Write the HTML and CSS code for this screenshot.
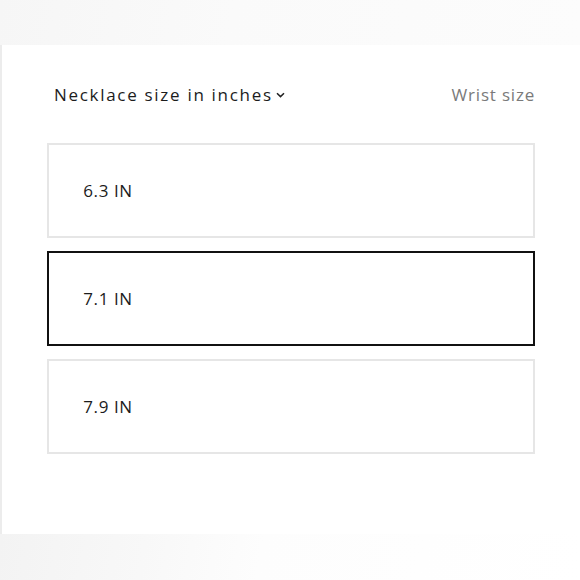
FILE: index.html
```
<!DOCTYPE html>
<html>
<head>
<meta charset="utf-8">
<link rel="stylesheet" href="styles.css">
</head>
<body>
<div class="top-band"></div>
<main class="panel">
  <div class="header">
    <div class="title">Necklace size in inches<svg class="chev" width="9" height="6" viewBox="0 0 9 6"><path d="M1 1.2 L4.5 4.6 L8 1.2" fill="none" stroke="#222" stroke-width="1.5"/></svg></div>
    <div class="alt">Wrist size</div>
  </div>
  <div class="options">
    <div class="option"><span class="label">6.3 IN</span></div>
    <div class="option selected"><span class="label">7.1 IN</span></div>
    <div class="option"><span class="label">7.9 IN</span></div>
  </div>
</main>
<div class="bottom-band"></div>
</body>
</html>
```
FILE: styles.css
```
html, body {
  margin: 0;
  padding: 0;
  background: #fff;
}
body {
  width: 580px;
  height: 580px;
  overflow: hidden;
  font-family: "Open Sans", "Liberation Sans", sans-serif;
  color: #1a1a1a;
}
.top-band {
  height: 45px;
  background: linear-gradient(100deg, #f6f6f6 0%, #fafafa 40%, #fcfcfc 100%);
}
.panel {
  height: 489px;
  box-sizing: border-box;
  border-left: 2px solid #ececec;
  background: #fff;
  padding-top: 37px;
}
.header {
  display: flex;
  justify-content: space-between;
  align-items: center;
  padding: 0 45px 0 52px;
  height: 24px;
}
.title {
  font-size: 17px;
  letter-spacing: 1.7px;
  color: #1c1c1c;
  display: flex;
  align-items: center;
}
.chev {
  margin-left: 3px;
  margin-top: 1px;
}
.alt {
  font-size: 17px;
  letter-spacing: 0.8px;
  color: #7a7a7a;
}
.options {
  display: flex;
  flex-direction: column;
  gap: 13px;
  margin: 37px 45px 0 45px;
}
.option {
  height: 95px;
  box-sizing: border-box;
  border: 2px solid #e6e6e6;
  display: flex;
  align-items: center;
}
.option.selected {
  border-color: #111;
}
.label {
  width: 80px;
  margin-left: 19px;
  text-align: center;
  font-size: 17px;
  letter-spacing: 0.6px;
  color: #1c1c1c;
}
.bottom-band {
  height: 46px;
  background: linear-gradient(100deg, #f3f3f3 0%, #f8f8f8 25%, #fdfdfd 45%, #fff 100%);
}
```
